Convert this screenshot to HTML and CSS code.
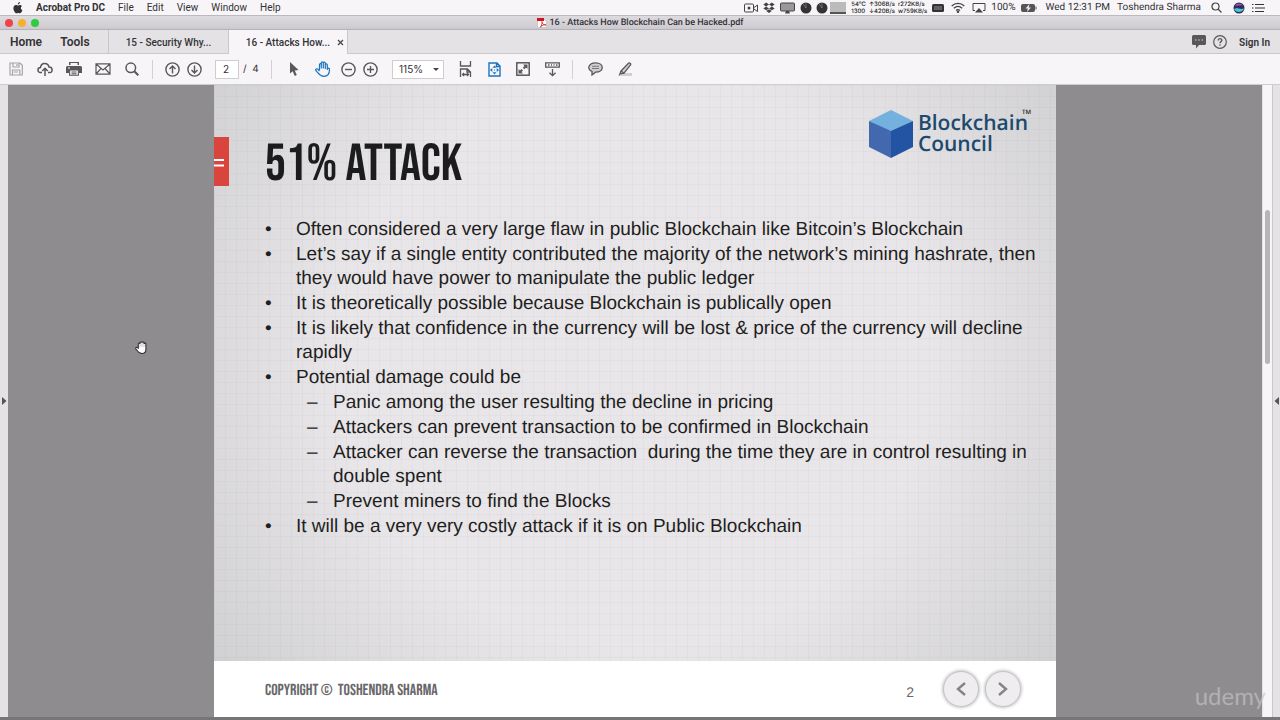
FILE: index.html
```html
<!DOCTYPE html>
<html lang="en">
<head>
<meta charset="utf-8">
<title>16 - Attacks How Blockchain Can be Hacked.pdf</title>
<link rel="stylesheet" href="styles.css">
</head>
<body>
<div class="screen">
  <header class="menubar">
    <nav class="menus" aria-label="Application menu">
      <button aria-label="Apple menu"><svg width="10" height="12" viewBox="0 0 10 12"><path fill="#333" d="M6.9 0C7 1.300 6 2.500 4.800 2.500 4.700 1.300 5.800.1 6.900 0ZM8.900 4.100C7.300 5.200 7.500 7.400 9.400 8.200 9 9.500 7.900 11.300 6.900 11.300 6.200 11.300 5.900 10.900 5.100 10.900 4.300 10.900 3.900 11.300 3.300 11.300 2.100 11.300.4 8.600.4 6.300.4 4.200 1.700 3 3 3 3.900 3 4.600 3.600 5.100 3.600 5.600 3.600 6.400 3 7.300 3 7.900 3 8.500 3.400 8.900 4.100Z"/></svg></button>
      <button class="app-name">Acrobat Pro DC</button>
      <button>File</button>
      <button>Edit</button>
      <button>View</button>
      <button>Window</button>
      <button>Help</button>
    </nav>
    <div class="status">
      <svg width="14" height="10" viewBox="0 0 14 10" fill="none" stroke="#444"><rect x=".5" y="1" width="9" height="8" rx="1"/><path d="M10 4.500 13.500 2v6.500L10 6"/><circle cx="5" cy="5" r="1.500" fill="#444" stroke="none"/></svg>
      <svg width="12" height="12" viewBox="0 0 12 12" fill="#444"><path d="M3.200.6 6 2.500 3.100 4.400.3 2.500ZM8.800.6 11.700 2.500 8.900 4.400 6 2.500ZM3.100 4.600 6 6.500 3.200 8.300.3 6.500ZM8.900 4.600 11.700 6.500 8.800 8.300 6 6.500ZM6 7.200 8.800 9.100 6 11 3.200 9.100Z"/></svg>
      <svg width="15" height="12" viewBox="0 0 15 12"><rect x=".5" y="1" width="14" height="8" rx="1" fill="#999" stroke="#444"/><path d="M6 9h3l1 2.500H5Z" fill="#444"/></svg>
      <svg width="28" height="12" viewBox="0 0 28 12"><circle cx="6" cy="6" r="5.500" fill="#333"/><circle cx="22" cy="6" r="5.500" fill="#333"/><path d="M6 6V1M22 6V1M6 6 3 2M22 6l-3-4" stroke="#999" stroke-width=".6"/></svg>
      <svg class="graph" width="16" height="12" viewBox="0 0 16 12"><path fill="#bbb" d="M0 0h16v12H0z"/><path fill="#555" d="M0 10h16v2H0z"/></svg>
      <div class="meters">
        <div class="meter"><span>54℃</span><span>1300</span></div>
        <div class="meter"><span>↑306B/s</span><span>↓420B/s</span></div>
        <div class="meter"><span>r272KB/s</span><span>w759KB/s</span></div>
      </div>
      <svg width="12" height="10" viewBox="0 0 12 10"><rect y="1" width="12" height="8" rx="1.500" fill="#333"/><path d="M3 3v4M5 3v4M7 3v4M9 3v4" stroke="#aaa" stroke-width=".8"/></svg>
      <svg class="radio" width="14" height="11" viewBox="0 0 14 11" fill="none" stroke="#444" stroke-width="1.300"><path d="M.7 4C4.300.5 9.700.5 13.300 4M2.800 6.300c2.500-2.300 5.900-2.300 8.400 0M5 8.400c1.300-1.100 2.700-1.100 4 0"/><circle cx="7" cy="9.800" r=".6" fill="#444"/></svg>
      <svg class="radio" width="14" height="11" viewBox="0 0 14 11"><path d="M3 8.500H1V1.500h12v7h-2" fill="none" stroke="#444"/><path d="m7 6 4 4.500H3Z" fill="#444"/></svg>
      <span>100%</span>
      <svg width="16" height="10" viewBox="0 0 16 10"><rect x=".5" y="1.500" width="13" height="7" rx="1" fill="#555" stroke="#555"/><path fill="#555" d="M14.500 3.500h1v3h-1z"/><path fill="#eee" d="M8.500 1 4.500 5.500h2.300L6 9l4-4.500H7.700Z"/></svg>
      <span class="clock">Wed 12:31 PM</span>
      <span class="user">Toshendra Sharma</span>
      <svg class="search" width="11" height="11" viewBox="0 0 11 11" fill="none" stroke="#444" stroke-width="1.200"><circle cx="4.500" cy="4.500" r="3.500"/><path d="m7 7 3.500 3.500"/></svg>
      <svg class="siri" width="12" height="12" viewBox="0 0 12 12"><circle cx="6" cy="6" r="5.500" fill="#302d58"/><path fill="#b34fb4" d="M1.500 3.500C4 1 8 1 10.500 3.500 7 2.800 5 4 1.500 3.500Z"/><path fill="#48c8dc" d="M1 7c3-2 6 1 10-.5C10 10.500 3 11.500 1 7Z"/></svg>
      <svg width="13" height="10" viewBox="0 0 13 10" stroke="#333" stroke-width="1.200"><path d="M0 1.500h1.500M3 1.500h9M0 5h1.500M3 5h10M0 8.500h1.500M3 8.500h9"/></svg>
    </div>
  </header>

  <div class="titlebar">
    <div class="lights"><i class="close"></i><i class="minimise"></i><i class="expand"></i></div>
    <h1 class="window-title">
      <svg width="10" height="10" viewBox="0 0 10 10"><path d="M.5.5h6l3 3v6h-9z" fill="#fff" stroke="#bbb" stroke-width=".7"/><path fill="#d3131b" d="M0 0h7v3H0z"/><path d="M3.500 9C5 6.500 5.400 4 5 3.500c-.5.500.5 3.500 4 3.500C7 6 5 7.500 3.500 9Z" fill="none" stroke="#d3131b" stroke-width=".8"/></svg>
      <span>16 - Attacks How Blockchain Can be Hacked.pdf</span>
    </h1>
    <div></div>
  </div>

  <div class="tabbar">
    <button class="home">Home</button>
    <button class="tools">Tools</button>
    <button class="tab">15 - Security Why...</button>
    <div class="tab active"><button>16 - Attacks How...</button><button class="tab-close" aria-label="Close tab"><svg width="7" height="7" viewBox="0 0 7 7"><path d="m1 1 5 5M6 1 1 6" stroke="#444" stroke-width="1.200"/></svg></button></div>
    <div class="account">
      <button aria-label="Messages"><svg width="14" height="14" viewBox="0 0 14 14"><path fill="#58585a" d="M1.500 0h11A1.500 1.500 0 0 1 14 1.500v7a1.500 1.500 0 0 1-1.500 1.500H7l-3 3.500V10H1.500A1.500 1.500 0 0 1 0 8.500v-7A1.500 1.500 0 0 1 1.500 0Z"/><path stroke="#ddd" stroke-width="1.200" d="M3 5h1.400M6.300 5h1.400M9.600 5H11"/></svg></button>
      <button class="help" aria-label="Help"><svg width="14" height="14" viewBox="0 0 14 14" fill="none" stroke="#58585a" stroke-width="1.200"><circle cx="7" cy="7" r="6.300"/><path d="M5.200 5.500C5.200 3 8.800 3 8.800 5.300 8.800 6.700 7 6.500 7 8.200M7 9.500v1.300" stroke-width="1.400"/></svg></button>
      <button class="sign-in">Sign In</button>
    </div>
  </div>

  <div class="toolbar">
    <div class="tools-group">
      <button aria-label="Save"><svg width="14" height="14" viewBox="0 0 14 14" fill="none" stroke="#a5a4a8" stroke-width="1.200"><path d="M1 1h10l2.300 2.300V13H1ZM4 1v4h6V1M3.500 13V8h7.300v5M8 2v2M5 10h4"/></svg></button>
      <button aria-label="Upload"><svg width="16" height="14" viewBox="0 0 16 14" fill="none" stroke="#58585a" stroke-width="1.500"><path d="M5 10.500H3.500C0 10.500.2 5.500 3.500 5.500 4 0 11 .2 12 5c4 0 4 5.500 1 5.500h-2M8 14V6.500M5.200 9 8 6.200 10.800 9"/></svg></button>
      <button aria-label="Print"><svg width="16" height="14" viewBox="0 0 16 14"><path fill="#58585a" d="M3 0h10v3H3ZM1.500 4h13A1.500 1.500 0 0 1 16 5.500V11h-3V8H3v3H0V5.500A1.500 1.500 0 0 1 1.500 4Z"/><path d="M3.600 8h8.800v5.300H3.600zM5.500 10h5M5.500 11.800h5" fill="#f7f5f8" stroke="#58585a" stroke-width="1.100"/><path fill="#f7f5f8" d="M4.500 1h7v3h-7zM2 5.500h2v1H2z"/></svg></button>
      <button aria-label="Email"><svg width="16" height="12" viewBox="0 0 16 12" fill="none" stroke="#58585a" stroke-width="1.200"><path d="M1 .8h14v10.400H1ZM1 1l7 6 7-6M1 11l5-5.500M15 11l-5-5.500"/></svg></button>
      <button aria-label="Find"><svg width="14" height="14" viewBox="0 0 14 14" fill="none" stroke="#58585a" stroke-width="1.500"><circle cx="5.800" cy="5.800" r="4.800"/><path stroke-width="2" d="m9.300 9.300 4 4"/></svg></button>
    </div>
    <div class="tools-group pages">
      <button aria-label="Previous page"><svg width="15" height="15" viewBox="0 0 15 15" fill="none" stroke="#58585a" stroke-width="1.400"><circle cx="7.500" cy="7.500" r="6.600"/><path d="M7.500 11.500v-7M4.500 7l3-3 3 3"/></svg></button>
      <button aria-label="Next page"><svg width="15" height="15" viewBox="0 0 15 15" fill="none" stroke="#58585a" stroke-width="1.400"><circle cx="7.500" cy="7.500" r="6.600"/><path d="M7.500 3.500v7M4.500 8l3 3 3-3"/></svg></button>
      <input type="text" value="2" aria-label="Page number">
      <span class="page-count">/&nbsp; 4</span>
    </div>
    <div class="tools-group view">
      <button aria-label="Select"><svg width="10" height="14" viewBox="0 0 10 14"><path fill="#58585a" d="M1 0v11.500l2.700-2.300L5.800 14l2-1L5.700 8.500 9.500 8Z"/></svg></button>
      <button aria-label="Hand"><svg width="16" height="16" viewBox="0 0 16 16" fill="none" stroke="#1a73c0" stroke-width="1.200" stroke-linejoin="round"><path d="M4.500 9V3.500c0-1.200 1.800-1.200 1.800 0V7 1.800c0-1.200 2-1.200 2 0V7 2c0-1.200 2-1.200 2 0v5.500V3.800c0-1.200 2-1.200 2 0v4.700c0-1.800 2.200-1.800 2.200 0C14.500 13 12.500 15.300 9 15.300 5 15.300 4 12.800.9 9.500.2 8 1.800 7.200 3 8.300L4.500 10"/></svg></button>
      <button class="zoom" aria-label="Zoom out"><svg width="15" height="15" viewBox="0 0 15 15" fill="none" stroke="#58585a" stroke-width="1.400"><circle cx="7.500" cy="7.500" r="6.600"/><path d="M4 7.500h7"/></svg></button>
      <button class="zoom" aria-label="Zoom in"><svg width="15" height="15" viewBox="0 0 15 15" fill="none" stroke="#58585a" stroke-width="1.400"><circle cx="7.500" cy="7.500" r="6.600"/><path d="M4 7.500h7M7.500 4v7"/></svg></button>
      <div class="zoom-level"><select aria-label="Zoom level"><option>115%</option></select></div>
      <button aria-label="Fit width"><svg width="13" height="16" viewBox="0 0 13 16" fill="none" stroke="#58585a" stroke-width="1.300"><path d="M1.500 0v5h10V0M1.500 16V8h7l3 3v5M8 8v3h3.500M3.500 13.500h6M5 12l-1.500 1.500L5 15M8 12l1.500 1.500L8 15"/></svg></button>
      <button aria-label="Fit page"><svg width="13" height="15" viewBox="0 0 13 15" fill="none" stroke="#1a73c0" stroke-width="1.400"><path d="M1 1h8l3 3v10H1ZM8.500 1v3.500H12"/><path fill="#1a73c0" stroke="none" d="m6.500 3.500 2 2.300h-4ZM6.500 12.500l2-2.300h-4ZM2 8l2.300-2v4ZM11 8 8.700 6v4ZM6 7.500h1v1H6z"/></svg></button>
      <button aria-label="Full screen"><svg width="14" height="14" viewBox="0 0 14 14"><rect x=".8" y=".8" width="12.400" height="12.400" fill="none" stroke="#58585a" stroke-width="1.500"/><path fill="#58585a" d="M7 2.500h4.500V7L10 5.500 8.300 7.200 6.800 5.700 8.500 4ZM2.500 7 4 8.500l1.500-1.500L7 8.500 5.500 10 7 11.500H2.500Z"/></svg></button>
      <button aria-label="Reading tools"><svg width="15" height="15" viewBox="0 0 15 15" fill="none" stroke="#58585a" stroke-width="1.300"><path d="M.7.8h13.600v4.400H.7ZM3 3h1.500M6 3h1M8.500 3h1M11 3h1.500M7.500 7v6.500M4.500 10.700l3 3 3-3"/></svg></button>
    </div>
    <div class="tools-group markup">
      <button aria-label="Comment"><svg width="15" height="14" viewBox="0 0 15 14"><path d="M7.500.8c9 0 9 9.400 0 9.400L4 13v-3.600C-1.500 7.500.5.8 7.500.8Z" fill="#d0cfd2" stroke="#58585a" stroke-width="1.300"/><path d="M4 4.300h7M4 6.500h7" stroke="#77767a"/></svg></button>
      <button aria-label="Highlight"><svg width="15" height="15" viewBox="0 0 15 15"><path fill="#d0cfd2" d="M5 11h10v3H3Z"/><path d="m4 9 7.500-7.800c1-1 2.800.5 2 1.700L7 11.200ZM4 9l-1 3 4-.8M2 13.500l1-1.500" fill="#d0cfd2" stroke="#58585a" stroke-width="1.300"/></svg></button>
    </div>
  </div>

  <main class="workspace">
    <button class="side" aria-label="Open navigation pane"><svg width="5" height="8" viewBox="0 0 5 8"><path fill="#555" d="M0 0v8l4.500-4Z"/></svg></button>
    <div class="viewer">
      <article class="page">
        <section class="slide">
          <div class="slide-head">
            <div class="tag"><svg width="15" height="49" viewBox="0 0 15 49"><path d="M0 23h10M0 28.500h10" stroke="#fff" stroke-width="2"/></svg></div>
            <h2>51% ATTACK</h2>
            <div class="logo">
              <svg width="44" height="48" viewBox="0 0 44 48"><path fill="#74b1de" d="M22 0 44 11 22 22 0 11Z"/><path fill="#4269b0" d="M0 11 22 21v27L0 37Z"/><path fill="#2353a3" d="M44 11 22 21v27l22-11Z"/></svg>
              <p>Blockchain<br>Council</p>
              <sup>TM</sup>
            </div>
          </div>
          <ul class="points">
            <li><span>•</span><p>Often considered a very large flaw in public Blockchain like Bitcoin’s Blockchain</p></li>
            <li><span>•</span><p>Let’s say if a single entity contributed the majority of the network’s mining hashrate, then they would have power to manipulate the public ledger</p></li>
            <li><span>•</span><p>It is theoretically possible because Blockchain is publically open</p></li>
            <li><span>•</span><p>It is likely that confidence in the currency will be lost &amp; price of the currency will decline rapidly</p></li>
            <li><span>•</span><p>Potential damage could be</p>
              <ul class="subpoints">
                <li><span>–</span><p>Panic among the user resulting the decline in pricing</p></li>
                <li><span>–</span><p>Attackers can prevent transaction to be confirmed in Blockchain</p></li>
                <li><span>–</span><p>Attacker can reverse the transaction&nbsp; during the time they are in control resulting in double spent</p></li>
                <li><span>–</span><p>Prevent miners to find the Blocks</p></li>
              </ul>
            </li>
            <li><span>•</span><p>It will be a very very costly attack if it is on Public Blockchain</p></li>
          </ul>
        </section>
        <footer class="slide-foot">
          <p class="copyright">COPYRIGHT ©&nbsp; TOSHENDRA SHARMA</p>
          <span class="number">2</span>
          <button class="round" aria-label="Previous slide"><svg width="10" height="14" viewBox="0 0 10 14"><path d="M9 1 2 7l7 6" fill="none" stroke="#858386" stroke-width="2.400"/></svg></button>
          <button class="round" aria-label="Next slide"><svg width="10" height="14" viewBox="0 0 10 14"><path d="m1 1 7 6-7 6" fill="none" stroke="#858386" stroke-width="2.400"/></svg></button>
        </footer>
      </article>
      <svg class="cursor" width="13" height="13" viewBox="0 0 13 13"><path d="M3.300 7V3c0-1.300 1.700-1.300 1.700 0V1.800c0-1.300 2-1.300 2 0 0-1.300 2-1.300 2 0V3c0-1.200 1.900-1.200 1.900 0v5.500c0 2.500-1.500 4-4 4-3 0-3.900-1.500-6-4.500-.7-1.500 1-2.300 2.400-1Z" fill="#fff" stroke="#333" stroke-width="1.100"/><path d="M5 3v3M7 2v4M9 3v3" stroke="#999" stroke-width=".6"/></svg>
    </div>
    <div class="scrollbar"><i></i></div>
    <button class="side right" aria-label="Open tools pane"><svg width="5" height="8" viewBox="0 0 5 8"><path fill="#555" d="M5 0v8L.5 4Z"/></svg></button>
    <span class="watermark">udemy</span>
  </main>
</div>
</body>
</html>
```
FILE: styles.css
```css
* { box-sizing: border-box; }
body, h1, h2, p, ul { margin: 0; padding: 0; }
ul { list-style: none; }
svg { display: block; flex: none; }
button {
  border: 0;
  padding: 0;
  background: none;
  color: inherit;
  font: inherit;
  white-space: nowrap;
}
.screen {
  display: flex;
  flex-direction: column;
  min-height: 100vh;
  padding-bottom: 3px;
  background: #767578;
  color: #333235;
  font-family: Roboto, Inter, sans-serif;
  font-size: 10px;
  text-rendering: geometricPrecision;
}

.menubar {
  display: flex;
  justify-content: space-between;
  align-items: center;
  height: 15px;
  padding: 0 15px 0 13px;
  background: #f7f5f8;
}
.menus { display: flex; align-items: center; gap: 13px; }
.app-name { font-weight: 700; }
.status { display: flex; align-items: center; gap: 5px; white-space: nowrap; }
.graph { margin-left: -3px; }
.meters { display: flex; gap: 3px; }
.meter {
  display: flex;
  flex-direction: column;
  font: 500 6px/7px Inter, sans-serif;
  color: #222;
}
.radio { margin-left: 2px; }
.clock { margin-left: 4px; }
.user { margin: 0 5px 0 2px; }
.search { margin-right: 6px; }
.siri { margin-right: 2px; }

.titlebar {
  display: grid;
  grid-template-columns: 1fr auto 1fr;
  align-items: center;
  height: 15px;
  border-top: 1px solid #bdbabf;
  border-bottom: 1px solid #b5b2b7;
  background: linear-gradient(#dedbe0, #cdc9d0);
}
.lights { display: flex; gap: 5px; padding-left: 5px; }
.lights i { width: 8px; height: 8px; border-radius: 50%; }
.close { background: #f04349; }
.minimise { background: #f6b12c; }
.expand { background: #2ecc3f; }
.window-title {
  display: flex;
  align-items: center;
  gap: 3px;
  font-size: 9px;
  font-weight: 500;
}

.tabbar {
  display: flex;
  height: 24px;
  background: #e4e2e5;
  box-shadow: inset 0 -1px #c9c7ca;
}
.home, .tools { width: 50px; font-size: 12px; font-weight: 600; }
.home { padding-left: 2px; }
.tools { width: 58px; padding-right: 8px; }
.tab {
  display: flex;
  align-items: center;
  justify-content: center;
  width: 120px;
  border-left: 1px solid #c9c7ca;
  font-weight: 500;
}
.tab.active {
  gap: 7px;
  padding-left: 14px;
  border-right: 1px solid #c9c7ca;
  background: #f7f5f8;
}
.account { display: flex; align-items: center; margin-left: auto; padding-right: 10px; }
.help { margin: 0 12px 0 7px; }
.sign-in { font-weight: 600; }

.toolbar {
  display: flex;
  align-items: center;
  height: 31px;
  padding-left: 2px;
  border-bottom: 1px solid #cfcdd0;
  background: #f7f5f8;
}
.tools-group { display: flex; align-items: center; gap: 1px; height: 19px; }
.tools-group + .tools-group {
  margin-left: 6px;
  padding-left: 8px;
  border-left: 1px solid #d3d1d4;
}
.tools-group button { display: flex; justify-content: center; width: 28px; }
.tools-group.pages { gap: 0; }
.tools-group.pages button { width: 22px; }
.pages input {
  width: 24px;
  height: 19px;
  margin: 0 4px 0 10px;
  padding: 0 7px;
  border: 1px solid #cfcdd0;
  background: #fff;
  color: #333;
  font: 10px Inter, sans-serif;
}
.page-count { width: 22px; font: 10px Inter, sans-serif; white-space: nowrap; }
.tools-group button.zoom { width: 21px; }
.zoom-level { position: relative; margin: 0 6px 0 10px; }
.zoom-level select {
  display: block;
  appearance: none;
  width: 52px;
  height: 19px;
  padding: 0 6px;
  border: 1px solid #cfcdd0;
  border-radius: 0;
  background: #fff;
  color: #333;
  font: 10px Inter, sans-serif;
}
.zoom-level::after {
  content: "";
  position: absolute;
  top: 8px;
  right: 5px;
  border: 3px solid transparent;
  border-top-color: #444;
  border-bottom: 0;
}

.workspace { position: relative; display: flex; flex: 1; }
.side {
  display: flex;
  align-items: center;
  justify-content: center;
  width: 8px;
  background: #e4e2e5;
}
.side.right { border-left: 1px solid #c9c7ca; }
.viewer {
  position: relative;
  display: flex;
  justify-content: center;
  flex: 1;
  background: #8e8c8f;
}
.scrollbar {
  display: flex;
  justify-content: center;
  width: 10px;
  padding-top: 125px;
  background: #f7f5f8;
  border-left: 1px solid #e4e2e5;
}
.scrollbar i { width: 5px; height: 154px; border-radius: 3px; background: #b7b5b8; }
.page { display: flex; flex-direction: column; width: 100%; max-width: 842px; }
.slide {
  flex: 1;
  background:
    repeating-linear-gradient(90deg, rgba(90, 90, 100, .04) 0 1px, transparent 1px 11px),
    repeating-linear-gradient(rgba(90, 90, 100, .04) 0 1px, transparent 1px 11px),
    radial-gradient(ellipse 64% 90% at 50% 48%, #e8e6e9 0 55%, #cfced1 100%);
}
.slide-head { display: flex; align-items: flex-start; height: 133px; padding-right: 28px; }
.tag { margin: 52px 36px 0 0; background: #d9453d; }
h2 {
  margin-top: 54px;
  color: #1c1b1e;
  font: 400 52px/52px "Bebas Neue", "Liberation Sans Narrow", sans-serif;
}
.logo {
  display: flex;
  align-items: center;
  gap: 5px;
  margin: 25px 0 0 auto;
  position: relative;
  color: #1c4a6e;
  font: 600 21px/21px "Open Sans", "Noto Sans", sans-serif;
}
.logo sup {
  position: absolute;
  top: -1px;
  right: -3px;
  font: 600 6px/6px "Open Sans", sans-serif;
  color: #222;
}
.points, .subpoints { display: grid; gap: 1px; }
.points {
  padding: 0 18px 0 51px;
  color: #1f1e21;
  font: 19px/24px "Liberation Sans", Arial, sans-serif;
}
.points li { display: grid; grid-template-columns: 31px 1fr; row-gap: 1px; }
.subpoints { grid-column: 2; padding-left: 11px; }
.subpoints li { grid-template-columns: 26px 1fr; }
.slide-foot {
  display: flex;
  align-items: center;
  height: 56px;
  padding: 0 35px 0 51px;
  background: #fff;
}
.copyright {
  flex: 1;
  margin-top: 3px;
  color: #68676a;
  font: 16px/16px "Bebas Neue", "Liberation Sans Narrow", sans-serif;
}
.number { margin: 6px 29px 0 0; color: #68676a; font: 14px "Liberation Sans", Arial, sans-serif; }
.round {
  display: flex;
  align-items: center;
  justify-content: center;
  width: 36px;
  height: 36px;
  border: 1px solid #c5c3c6;
  border-radius: 50%;
  background: #efedf0;
  box-shadow: 0 0 3px 1px #c9c7ca;
}
.round + .round { margin-left: 6px; }
.cursor { position: absolute; left: 127px; top: 256px; }
.watermark {
  position: absolute;
  right: 14px;
  bottom: 4px;
  color: rgba(200, 198, 202, .65);
  font: 24px/32px Lato, "Open Sans", sans-serif;
}
```
